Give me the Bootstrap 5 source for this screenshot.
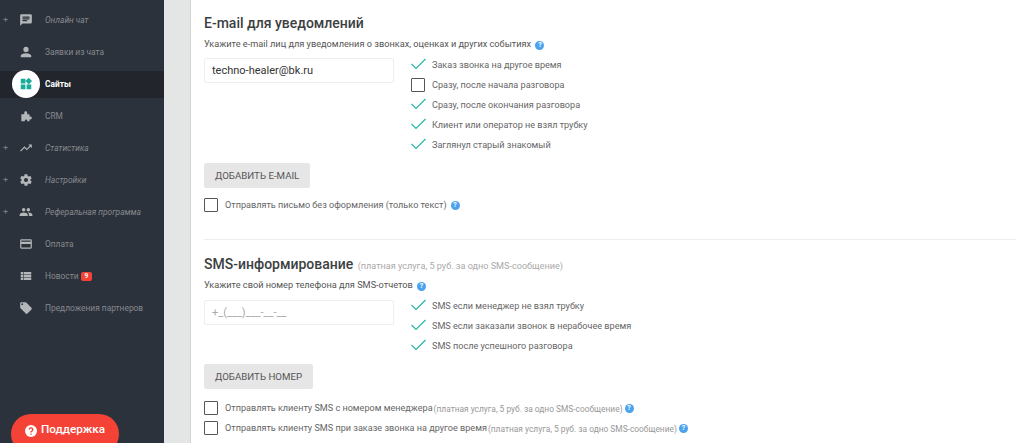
<!DOCTYPE html>
<html lang="ru">
<head>
    <meta charset="UTF-8">
    <title>Настройки уведомлений</title>
    <link href="https://cdn.jsdelivr.net/npm/bootstrap@5.3.0/dist/css/bootstrap.min.css" rel="stylesheet">
    <style>
        html, body { height: 443px; overflow: hidden; }
        body { font-family: Roboto, "Liberation Sans", sans-serif; background: #e4e6e6; color: #555; }
        .page-wrap { height: 443px; position: relative; }
        .side-menu { width: 164px; flex: none; background: #2c323b; padding-top: 4px; }
        .menu-row { height: 32px; font-size: 8.4px; color: #85898e; padding-left: 19px; position: relative; }
        .menu-row.fold { font-style: italic; }
        .menu-row.active { height: 27px; margin: 3px 0 2px; background: #22262c; color: #fff; font-weight: 700; }
        .menu-plus { position: absolute; left: 3px; top: 9px; font-size: 9px; color: #777c82; font-style: normal; line-height: 14px; }
        .menu-ico { width: 14px; height: 14px; fill: #b4b7ba; margin-right: 12px; flex: none; }
        .ico-disc { position: absolute; left: 12px; top: -1px; width: 28px; height: 28px; border-radius: 50%; background: #fff; display: flex; align-items: center; justify-content: center; }
        .ico-disc svg { width: 14px; height: 14px; fill: #1aab9b; }
        .menu-label { margin-left: 26px; }
        .news-tag { background: #f44336; color: #fff; font-size: 6.5px; font-weight: 700; border-radius: 2px; padding: 0 4px; line-height: 9px; margin-left: 2px; font-style: normal; }
        .support-btn { position: absolute; left: 11px; top: 414px; width: 108px; height: 40px; border-radius: 20px; background: #f44336; color: #fff; font-size: 11.7px; font-weight: 500; padding: 7px 0 0 14px; gap: 4px; }
        .support-btn svg { width: 12px; height: 12px; }
        .main-panel { margin-left: 26px; flex: 1; background: #fff; border-left: 1px solid #d4d6d6; padding: 15px 8px 0 13px; }
        .sect-title { font-size: 14px; font-weight: 500; color: #3c3f42; line-height: 16px; margin: 0; }
        .sect-title small { font-size: 9.1px; font-weight: 400; color: #aaa; margin-left: 1px; line-height: 1; }
        .field-hint { font-size: 9.2px; color: #555; line-height: 12px; height: 12px; margin-top: 7px; }
        .help-dot { display: inline-block; width: 9px; height: 9px; border-radius: 50%; background: #4aa3ec; color: #fff; font-size: 7px; font-weight: 700; line-height: 9px; text-align: center; margin-left: 2px; vertical-align: 0; flex: none; }
        .opt-row .help-dot { margin: -2px 0 0 4px; }
        .opt-row .paid-note + .help-dot { margin-left: 2px; }
        .form-control.mail-input { width: 190px; height: 25px; flex: none; font-size: 11px; padding: 0 7px; border: 1px solid #eee; border-radius: 2px; color: #333; }
        .form-control.mail-input::placeholder { color: #aaa; }
        .opt-list { margin: -3px 0 0 17px; }
        .opt-list.sms-opts { margin-top: -4px; }
        .opt-row { height: 20px; padding-top: 2px; font-size: 9.1px; color: #666; }
        .tick { width: 15px; height: 12px; margin-right: 6px; flex: none; fill: none; stroke: #26b7a6; stroke-width: 1.2; position: relative; top: -2px; }
        .box { width: 14px; height: 14px; margin-top: -2px; border: 1px solid #555; border-radius: 1px; margin-right: 7px; flex: none; background: #fff; }
        .btn.gray-btn { height: 25px; background: #e6e6e6; color: #555; font-size: 9.7px; padding: 0 11px; border: 0; border-radius: 2px; line-height: 25px; display: block; }
        .paid-note { color: #999; font-size: 8.4px; margin-left: 1px; }
        .row-gap-a { margin-top: 7px; }
        .row-gap-b { margin-top: 9px; }
        .sms-field { margin-top: 9px; }
        .divider-line { border-top: 1px solid #eee; margin: 24px 0 16px; }
    </style>
</head>
<body>
    <div class="page-wrap d-flex">
        <nav class="side-menu">
            <div class="menu-row fold d-flex align-items-center">
                <span class="menu-plus">+</span>
                <svg class="menu-ico" viewBox="0 0 24 24"><path d="M20 2H4a2 2 0 0 0-2 2v18l4-4h14a2 2 0 0 0 2-2V4a2 2 0 0 0-2-2zM6 9h12v2H6zm8 5H6v-2h8zm4-6H6V6h12z"/></svg>
                <span>Онлайн чат</span>
            </div>
            <div class="menu-row d-flex align-items-center">
                <svg class="menu-ico" viewBox="0 0 24 24"><path d="M12 12a4.500 4.500 0 1 0 0-9 4.500 4.500 0 0 0 0 9zm0 2c-3 0-9 1.500-9 4.500V21h18v-2.500c0-3-6-4.500-9-4.500z"/></svg>
                <span>Заявки из чата</span>
            </div>
            <div class="menu-row active d-flex align-items-center">
                <span class="ico-disc"><svg viewBox="0 0 24 24"><path d="M13 13v8h8v-8zM3 21h8v-8H3zM3 3v8h8V3zm13.700-1.600L11 7l5.700 5.700L22.300 7z"/></svg></span>
                <span class="menu-label">Сайты</span>
            </div>
            <div class="menu-row d-flex align-items-center">
                <svg class="menu-ico" viewBox="0 0 24 24"><path d="M4 9h5V6.500a2.500 2.500 0 0 1 5 0V9h4v4h1.500a2.500 2.500 0 0 1 0 5H18v3h-4v-1a2 2 0 0 0-4 0v1H4z"/></svg>
                <span>CRM</span>
            </div>
            <div class="menu-row fold d-flex align-items-center">
                <span class="menu-plus">+</span>
                <svg class="menu-ico" viewBox="0 0 24 24"><path d="M16 6l2.300 2.300-4.900 4.900-4-4L2 16.600 3.400 18l6-6 4 4 6.300-6.300L22 12V6z"/></svg>
                <span>Статистика</span>
            </div>
            <div class="menu-row fold d-flex align-items-center">
                <span class="menu-plus">+</span>
                <svg class="menu-ico" viewBox="0 0 24 24"><path d="M19.400 13c0-.3.100-.6.100-1s0-.7-.1-1l2.100-1.600c.2-.2.200-.4.100-.6l-2-3.500c-.1-.2-.4-.3-.6-.2l-2.500 1c-.5-.4-1.100-.7-1.700-1l-.4-2.600c0-.2-.2-.4-.5-.4h-4c-.2 0-.4.200-.5.400l-.4 2.600c-.6.300-1.200.6-1.700 1l-2.500-1c-.2-.1-.5 0-.6.200l-2 3.500c-.1.200-.1.500.1.600L4.500 11c0 .3-.1.700-.1 1s0 .7.100 1l-2.100 1.600c-.2.200-.2.400-.1.600l2 3.500c.1.200.4.300.6.200l2.500-1c.5.400 1.100.7 1.700 1l.4 2.600c0 .2.200.4.500.4h4c.2 0 .4-.2.500-.4l.4-2.600c.6-.3 1.200-.6 1.700-1l2.500 1c.2.100.5 0 .6-.2l2-3.500c.1-.2.100-.5-.1-.6zM12 15.500a3.500 3.500 0 1 1 0-7 3.500 3.500 0 0 1 0 7z"/></svg>
                <span>Настройки</span>
            </div>
            <div class="menu-row fold d-flex align-items-center">
                <span class="menu-plus">+</span>
                <svg class="menu-ico" viewBox="0 0 24 24"><path d="M16 11a3 3 0 1 0 0-6 3 3 0 0 0 0 6zm-8 0a3 3 0 1 0 0-6 3 3 0 0 0 0 6zm0 2c-2.300 0-7 1.200-7 3.500V19h14v-2.500C15 14.200 10.300 13 8 13zm8 0h-1c1.200.8 2 2 2 3.500V19h6v-2.500c0-2.300-4.700-3.500-7-3.500z"/></svg>
                <span>Реферальная программа</span>
            </div>
            <div class="menu-row d-flex align-items-center">
                <svg class="menu-ico" viewBox="0 0 24 24"><path d="M20 4H4a2 2 0 0 0-2 2v12a2 2 0 0 0 2 2h16a2 2 0 0 0 2-2V6a2 2 0 0 0-2-2zm0 14H4v-6h16zm0-10H4V6h16z"/></svg>
                <span>Оплата</span>
            </div>
            <div class="menu-row d-flex align-items-center">
                <svg class="menu-ico" viewBox="0 0 24 24"><path d="M3 5v4h4V5zm5 0v4h13V5zM3 10v4h4v-4zm5 0v4h13v-4zM3 15v4h4v-4zm5 0v4h13v-4z"/></svg>
                <span>Новости</span><span class="news-tag">9</span>
            </div>
            <div class="menu-row d-flex align-items-center">
                <svg class="menu-ico" viewBox="0 0 24 24"><path d="M21.400 11.600l-9-9A2 2 0 0 0 11 2H4a2 2 0 0 0-2 2v7c0 .6.200 1.100.6 1.400l9 9a2 2 0 0 0 2.800 0l7-7a2 2 0 0 0 0-2.800zM5.500 7a1.500 1.500 0 1 1 0-3 1.500 1.500 0 0 1 0 3z"/></svg>
                <span>Предложения партнеров</span>
            </div>
        </nav>

        <main class="main-panel">
            <h2 class="sect-title">E-mail для уведомлений</h2>
            <div class="field-hint">Укажите e-mail лиц для уведомления о звонках, оценках и других событиях <span class="help-dot">?</span></div>
            <div class="d-flex mt-2">
                <input type="text" class="form-control mail-input" value="techno-healer@bk.ru">
                <div class="opt-list">
                    <div class="opt-row d-flex align-items-center"><svg class="tick" viewBox="0 0 15 12"><path d="M.5 6l4.500 4.500L14.500 1"/></svg>Заказ звонка на другое время</div>
                    <div class="opt-row d-flex align-items-center"><span class="box"></span>Сразу, после начала разговора</div>
                    <div class="opt-row d-flex align-items-center"><svg class="tick" viewBox="0 0 15 12"><path d="M.5 6l4.500 4.500L14.500 1"/></svg>Сразу, после окончания разговора</div>
                    <div class="opt-row d-flex align-items-center"><svg class="tick" viewBox="0 0 15 12"><path d="M.5 6l4.500 4.500L14.500 1"/></svg>Клиент или оператор не взял трубку</div>
                    <div class="opt-row d-flex align-items-center"><svg class="tick" viewBox="0 0 15 12"><path d="M.5 6l4.500 4.500L14.500 1"/></svg>Заглянул старый знакомый</div>
                </div>
            </div>
            <button class="btn gray-btn mt-2">ДОБАВИТЬ E-MAIL</button>
            <div class="opt-row d-flex align-items-center row-gap-a"><span class="box"></span>Отправлять письмо без оформления (только текст)<span class="help-dot">?</span></div>

            <div class="divider-line"></div>

            <h2 class="sect-title">SMS-информирование <small>(платная услуга, 5 руб. за одно SMS-сообщение)</small></h2>
            <div class="field-hint">Укажите свой номер телефона для SMS-отчетов <span class="help-dot">?</span></div>
            <div class="d-flex sms-field">
                <input type="text" class="form-control mail-input" placeholder="+_(___)___-__-__">
                <div class="opt-list sms-opts">
                    <div class="opt-row d-flex align-items-center"><svg class="tick" viewBox="0 0 15 12"><path d="M.5 6l4.500 4.500L14.500 1"/></svg>SMS если менеджер не взял трубку</div>
                    <div class="opt-row d-flex align-items-center"><svg class="tick" viewBox="0 0 15 12"><path d="M.5 6l4.500 4.500L14.500 1"/></svg>SMS если заказали звонок в нерабочее время</div>
                    <div class="opt-row d-flex align-items-center"><svg class="tick" viewBox="0 0 15 12"><path d="M.5 6l4.500 4.500L14.500 1"/></svg>SMS после успешного разговора</div>
                </div>
            </div>
            <button class="btn gray-btn mt-2">ДОБАВИТЬ НОМЕР</button>
            <div class="opt-row d-flex align-items-center row-gap-b"><span class="box"></span>Отправлять клиенту SMS с номером менеджера <span class="paid-note">(платная услуга, 5 руб. за одно SMS-сообщение)</span><span class="help-dot">?</span></div>
            <div class="opt-row d-flex align-items-center"><span class="box"></span>Отправлять клиенту SMS при заказе звонка на другое время <span class="paid-note">(платная услуга, 5 руб. за одно SMS-сообщение)</span><span class="help-dot">?</span></div>
        </main>

        <div class="support-btn d-flex align-items-start">
            <svg viewBox="0 0 24 24" class="mt-1"><circle cx="12" cy="12" r="12" fill="#fff"/><path d="M8.500 9.200a3.500 3.500 0 1 1 5.300 3c-1.200.7-1.800 1.300-1.800 2.600M12 17v2.500" fill="none" stroke="#f44336" stroke-width="2.600"/></svg>
            <span>Поддержка</span>
        </div>
    </div>
    <script src="https://cdn.jsdelivr.net/npm/bootstrap@5.3.0/dist/js/bootstrap.bundle.min.js"></script>
</body>
</html>
